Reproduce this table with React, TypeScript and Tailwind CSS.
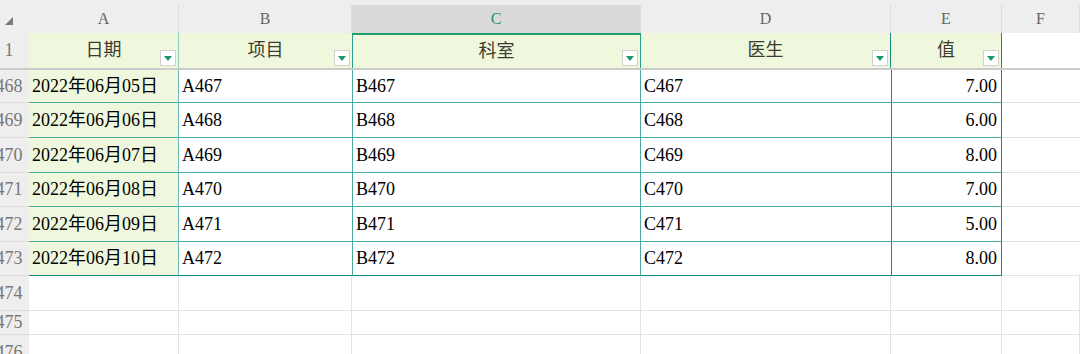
import React from 'react'

const GRID = 'grid grid-cols-[29px_150px_173px_289px_250px_111px_1fr]'
const FONT = "font-['Liberation_Serif','Noto_Sans_CJK_SC',serif]"

const rows = [
  { n: 468, date: '2022年06月05日', b: 'A467', c: 'B467', d: 'C467', v: '7.00', h: 'h-[33px]' },
  { n: 469, date: '2022年06月06日', b: 'A468', c: 'B468', d: 'C468', v: '6.00', h: 'h-[35px]' },
  { n: 470, date: '2022年06月07日', b: 'A469', c: 'B469', d: 'C469', v: '8.00', h: 'h-[35px]' },
  { n: 471, date: '2022年06月08日', b: 'A470', c: 'B470', d: 'C470', v: '7.00', h: 'h-[34px]' },
  { n: 472, date: '2022年06月09日', b: 'A471', c: 'B471', d: 'C471', v: '5.00', h: 'h-[35px]' },
  { n: 473, date: '2022年06月10日', b: 'A472', c: 'B472', d: 'C472', v: '8.00', h: 'h-[34px]' },
]

const emptyRows = [
  { n: 474, h: 'h-[35px]' },
  { n: 475, h: 'h-[24px]' },
  { n: 476, h: 'h-[35px]' },
]

// row number column is cropped on the left in the capture
const RowNum = ({ n, border = true }: { n: number | string; border?: boolean }) => (
  <div className={`overflow-hidden bg-[#eeeeee] ${border ? 'border-b border-[#dcdcdc]' : ''}`}>
    <div className="-ml-[11px] flex h-full w-[40px] items-center justify-center text-[18px] text-[#777777]">{n}</div>
  </div>
)

const FilterButton = () => (
  <span className="absolute right-[2px] bottom-[2px] flex h-[16px] w-[16px] items-center justify-center border border-[#d2d2d2] bg-white">
    <svg width="8" height="5" viewBox="0 0 8 5">
      <polygon points="0,0 8,0 4,5" fill="#1a9a6c" />
    </svg>
  </span>
)

const colLetters = ['A', 'B', 'C', 'D', 'E', 'F']
const headers = ['日期', '项目', '科室', '医生', '值']

export default function App() {
  return (
    <div className={`h-[354px] w-[1080px] overflow-hidden bg-white ${FONT}`}>
      {/* column letters */}
      <div className="h-[5px] bg-[#eeeeee]" />
      <div className={`${GRID} h-[28px] bg-[#eeeeee]`}>
        <div className="relative">
          <svg className="absolute left-[5px] top-[12px]" width="8" height="8" viewBox="0 0 8 8">
            <polygon points="8,0 8,8 0,8" fill="#7a7a7a" />
          </svg>
        </div>
        {colLetters.map((l) => (
          <div
            key={l}
            className={`flex items-center justify-center border-r border-[#dcdcdc] text-[16px] ${
              l === 'C' ? 'bg-[#d9d9d9] text-[#1f8f7a]' : 'text-[#666666]'
            }`}
          >
            {l}
          </div>
        ))}
      </div>

      {/* filter header row */}
      <div className={`${GRID} h-[35px]`}>
        <RowNum n={1} border={false} />
        {headers.map((t, i) => (
          <div
            key={t}
            className={`relative flex items-center justify-center bg-[#eff8dc] font-['Liberation_Serif','Noto_Sans_CJK_SC',serif] text-[18px] text-[#3c3c30] ${
              i === 2
                ? 'border-x border-t-2 border-x-[#2a9d8f] border-t-[#1fa06a]'
                : i === 0
                  ? 'border-r border-[#8ccac2]'
                  : i === 1
                    ? ''
                    : 'border-r border-[#17897e]'
            }`}
          >
            {t}
            <FilterButton />
          </div>
        ))}
        <div className="bg-white" />
      </div>
      <div className="h-[2px] bg-[#cbcbcb]" />

      {/* data rows */}
      {rows.map((r, idx) => {
        const last = idx === rows.length - 1
        const hb = last ? 'border-b border-b-[#17897e]' : 'border-b border-b-[#4aa9a1]'
        return (
          <div key={r.n} className={`${GRID} ${r.h} text-[18px] text-black`}>
            <RowNum n={r.n} />
            <div className={`flex items-center bg-[#eff8dc] pl-[3px] ${hb} border-r border-r-[#6cbab3]`}>{r.date}</div>
            <div className={`flex items-center pl-[3px] ${hb}`}>{r.b}</div>
            <div className={`flex items-center pl-[3px] ${hb} border-x border-x-[#4aa9a1]`}>{r.c}</div>
            <div className={`flex items-center pl-[3px] ${hb}`}>{r.d}</div>
            <div className={`flex items-center justify-end pr-[4px] ${hb} border-x border-x-[#17897e]`}>{r.v}</div>
            <div className="border-b border-[#e3e3e3]" />
          </div>
        )
      })}

      {/* empty rows */}
      {emptyRows.map((r) => (
        <div key={r.n} className={`${GRID} ${r.h}`}>
          <RowNum n={r.n} />
          {[0, 1, 2, 3, 4, 5].map((c) => (
            <div key={c} className="border-r border-b border-[#e3e3e3]" />
          ))}
        </div>
      ))}
    </div>
  )
}
